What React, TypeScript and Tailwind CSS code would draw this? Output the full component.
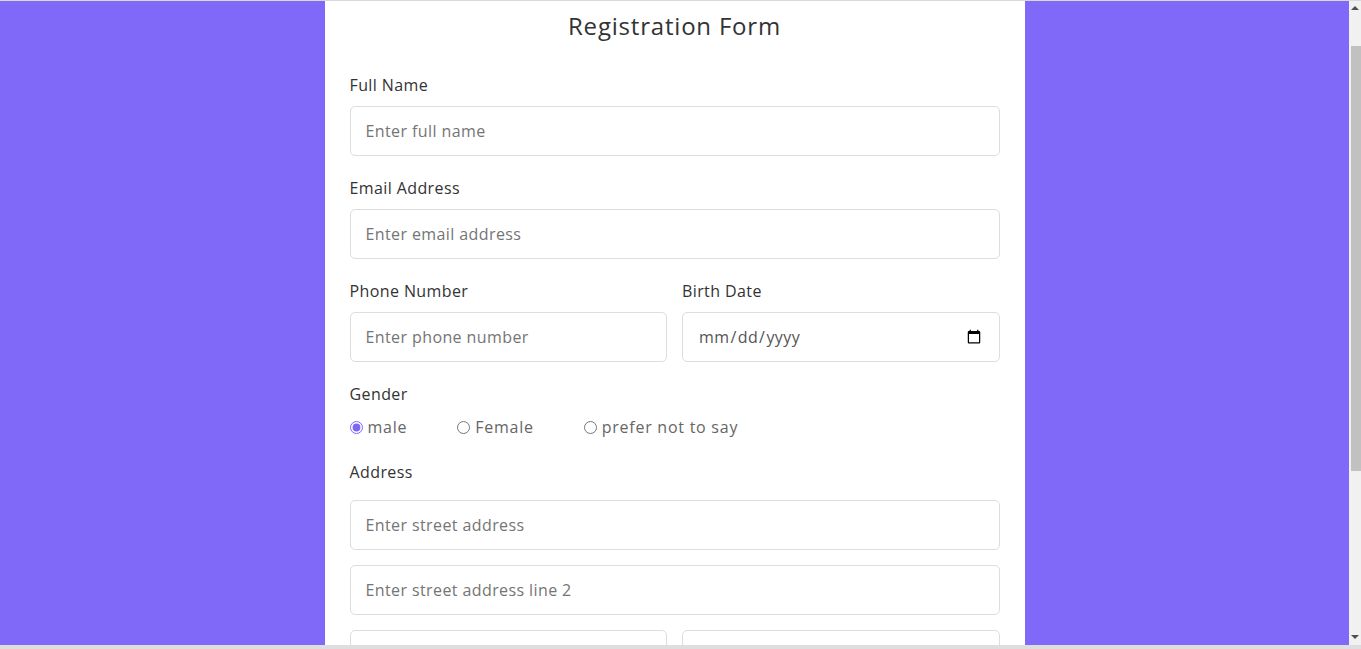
import React from "react";

function Field({ label, placeholder, type = "text" }: { label: string; placeholder?: string; type?: string }) {
  return (
    <div className="mb-5 flex flex-col">
      <label className="mb-[9px] h-6 text-[16px] leading-6 text-[#333]">{label}</label>
      <input
        type={type}
        placeholder={placeholder}
        className="h-[50px] w-full rounded-[5px] border border-[#ddd] bg-white px-[15px] text-[16px] tracking-[0.4px] text-[#555] outline-none placeholder:text-[#757575]"
      />
    </div>
  );
}

function Radio({ label, checked }: { label: string; checked?: boolean }) {
  return (
    <label className="flex items-center gap-[5px] text-[16px] tracking-[0.75px] text-[#666]">
      <input type="radio" name="gender" defaultChecked={checked} className="h-[13px] w-[13px] accent-[#7c66f5]" />
      {label}
    </label>
  );
}

const inputCls =
  "h-[50px] w-full rounded-[5px] border border-[#ddd] bg-white px-[15px] text-[16px] tracking-[0.4px] outline-none placeholder:text-[#757575]";

export default function App() {
  return (
    <div className="flex h-[649px] w-full flex-col overflow-hidden bg-white font-['Open_Sans',sans-serif] tracking-[0.4px]">
      <div className="h-px bg-[#d9d9d9]" />
      <div className="flex min-h-0 flex-1">
        <main className="flex flex-1 justify-center overflow-hidden bg-[#8069f9]">
          <form className="w-[700px] self-start bg-white px-[25px] pt-[7px] pb-10">
            <h1 className="mb-[29px] text-center text-[24px] leading-9 font-medium tracking-[0.8px] text-[#333]">
              Registration Form
            </h1>

            <Field label="Full Name" placeholder="Enter full name" />
            <Field label="Email Address" placeholder="Enter email address" type="email" />

            <div className="grid grid-cols-2 gap-[15px]">
              <Field label="Phone Number" placeholder="Enter phone number" type="tel" />
              <Field label="Birth Date" type="date" />
            </div>

            <div className="mb-[21px]">
              <div className="mb-[9px] h-6 text-[16px] leading-6 text-[#333]">Gender</div>
              <div className="flex h-6 items-center gap-[50px]">
                <Radio label="male" checked />
                <Radio label="Female" />
                <Radio label="prefer not to say" />
              </div>
            </div>

            <div className="flex flex-col gap-[15px]">
              <div className="mb-px h-6 text-[16px] leading-6 text-[#333]">Address</div>
              <input placeholder="Enter street address" className={inputCls} />
              <input placeholder="Enter street address line 2" className={inputCls} />
              <div className="grid grid-cols-2 gap-[15px]">
                <input placeholder="Enter city" className={inputCls} />
                <input placeholder="Enter region" className={inputCls} />
              </div>
            </div>
          </form>
        </main>
        <div className="flex w-3 flex-col items-center bg-[#f1f1f1]">
          <div className="mt-[5px] h-0 w-0 border-x-[4px] border-b-[4px] border-x-transparent border-b-[#505050]" />
          <div className="mt-[36px] ml-[2px] h-[425px] w-[10px] bg-[#c1c1c1]" />
          <div className="flex-1" />
          <div className="mb-[6px] h-0 w-0 border-x-[4px] border-t-[4px] border-x-transparent border-t-[#505050]" />
        </div>
      </div>
      <div className="h-1 bg-[#dedede]" />
    </div>
  );
}
